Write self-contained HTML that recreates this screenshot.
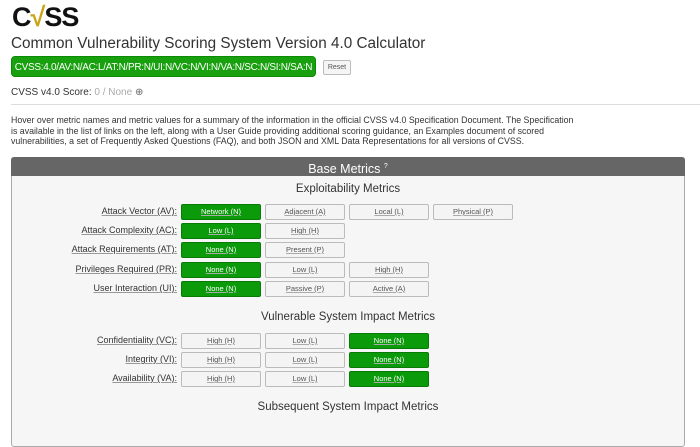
<!DOCTYPE html>
<html><head><meta charset="utf-8"><style>
body{margin:0;width:700px;height:426px;overflow:hidden;background:#fff;font-family:"Liberation Sans",sans-serif;color:#333;position:relative}
.a{position:absolute;white-space:nowrap}
.logo{left:12px;top:2px;font-size:27px;font-weight:bold;color:#111;letter-spacing:-1px}
.title{left:11px;top:35px;font-size:15.3px;color:#333}
.vec{left:11px;top:56px;width:305px;height:21px;background:#18a00e;border:1px solid #0c8a05;border-radius:4px;color:#fff;font-size:10px;line-height:21px;text-align:center;box-sizing:border-box;letter-spacing:-0.3px}
.reset{left:323px;top:60px;width:28px;height:15px;border:1px solid #bbb;background:#f5f5f5;font-size:7px;line-height:13px;text-align:center;box-sizing:border-box;color:#555;border-radius:2px}
.score{left:11px;top:87px;font-size:10px}
.hr{left:11px;top:104px;width:689px;height:1px;background:#ddd}
.p{left:11px;top:115px;font-size:8.8px;line-height:10.5px;color:#333}
.panel{left:11px;top:157px;width:674px;height:290px;background:#f6f6f6;border:1px solid #aaa;border-radius:3px;box-sizing:border-box}
.hdr{left:11px;top:157px;width:674px;height:19px;background:#666;color:#fff;font-size:12.5px;line-height:19px;text-align:center;border-radius:3px 3px 0 0}
.h{width:674px;left:11px;text-align:center;font-size:11.5px;color:#333}
.lb{width:166px;left:11px;text-align:right;font-size:9px;text-decoration:underline;text-decoration-color:#999;color:#333}
.b{width:80px;height:16px;box-sizing:border-box;border:1px solid #bbb;background:#f4f4f4;border-radius:2px;font-size:7.5px;line-height:14px;text-align:center;color:#555}
.b span{text-decoration:underline;text-decoration-color:#aaa}
.g{background:#0a9a0a;border-color:#077a07;color:#fff}
</style></head><body>
<div class="a logo">C<span style="color:#c9a416">√</span>SS</div>
<div class="a title">Common Vulnerability Scoring System Version 4.0 Calculator</div>
<div class="a vec">CVSS:4.0/AV:N/AC:L/AT:N/PR:N/UI:N/VC:N/VI:N/VA:N/SC:N/SI:N/SA:N</div>
<div class="a reset">Reset</div>
<div class="a score">CVSS v4.0 Score: <span style="color:#aaa">0 / None</span> <span style="color:#666">⊕</span></div>
<div class="a hr"></div>
<div class="a p">Hover over metric names and metric values for a summary of the information in the official CVSS v4.0 Specification Document. The Specification<br>is available in the list of links on the left, along with a User Guide providing additional scoring guidance, an Examples document of scored<br>vulnerabilities, a set of Frequently Asked Questions (FAQ), and both JSON and XML Data Representations for all versions of CVSS.</div>
<div class="a panel"></div>
<div class="a hdr">Base Metrics <sup style="font-size:7px">?</sup></div>
<div class="a h" style="top:183px">Exploitability Metrics</div>

<div class="a lb" style="top:206px">Attack Vector (AV):</div>
<div class="a b g" style="left:181px;top:204px"><span>Network (N)</span></div>
<div class="a b" style="left:265px;top:204px"><span>Adjacent (A)</span></div>
<div class="a b" style="left:349px;top:204px"><span>Local (L)</span></div>
<div class="a b" style="left:433px;top:204px"><span>Physical (P)</span></div>

<div class="a lb" style="top:225px">Attack Complexity (AC):</div>
<div class="a b g" style="left:181px;top:223px"><span>Low (L)</span></div>
<div class="a b" style="left:265px;top:223px"><span>High (H)</span></div>

<div class="a lb" style="top:244px">Attack Requirements (AT):</div>
<div class="a b g" style="left:181px;top:242px"><span>None (N)</span></div>
<div class="a b" style="left:265px;top:242px"><span>Present (P)</span></div>

<div class="a lb" style="top:264px">Privileges Required (PR):</div>
<div class="a b g" style="left:181px;top:262px"><span>None (N)</span></div>
<div class="a b" style="left:265px;top:262px"><span>Low (L)</span></div>
<div class="a b" style="left:349px;top:262px"><span>High (H)</span></div>

<div class="a lb" style="top:283px">User Interaction (UI):</div>
<div class="a b g" style="left:181px;top:281px"><span>None (N)</span></div>
<div class="a b" style="left:265px;top:281px"><span>Passive (P)</span></div>
<div class="a b" style="left:349px;top:281px"><span>Active (A)</span></div>

<div class="a h" style="top:311px">Vulnerable System Impact Metrics</div>
<div class="a lb" style="top:335px">Confidentiality (VC):</div>
<div class="a b" style="left:181px;top:333px"><span>High (H)</span></div>
<div class="a b" style="left:265px;top:333px"><span>Low (L)</span></div>
<div class="a b g" style="left:349px;top:333px"><span>None (N)</span></div>
<div class="a lb" style="top:354px">Integrity (VI):</div>
<div class="a b" style="left:181px;top:352px"><span>High (H)</span></div>
<div class="a b" style="left:265px;top:352px"><span>Low (L)</span></div>
<div class="a b g" style="left:349px;top:352px"><span>None (N)</span></div>
<div class="a lb" style="top:373px">Availability (VA):</div>
<div class="a b" style="left:181px;top:371px"><span>High (H)</span></div>
<div class="a b" style="left:265px;top:371px"><span>Low (L)</span></div>
<div class="a b g" style="left:349px;top:371px"><span>None (N)</span></div>

<div class="a h" style="top:401px">Subsequent System Impact Metrics</div>
</body></html>
